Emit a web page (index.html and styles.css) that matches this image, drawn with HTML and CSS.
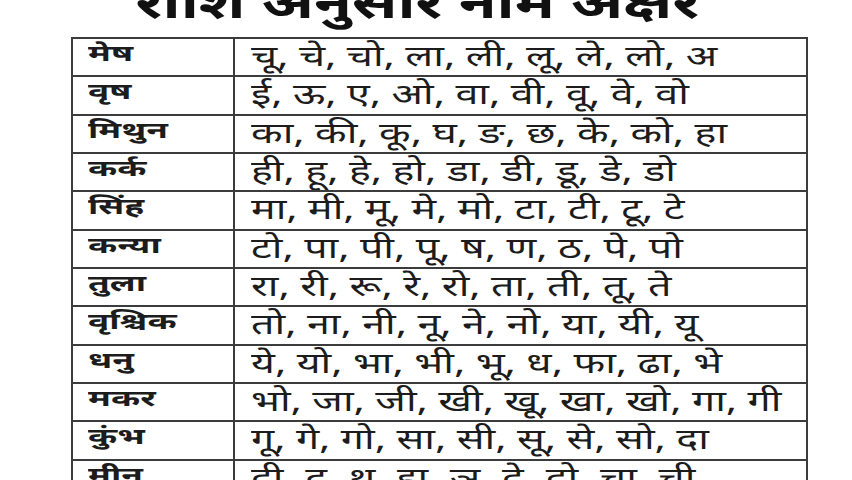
FILE: index.html
```html
<!DOCTYPE html>
<html lang="hi">
<head>
<meta charset="utf-8">
<link rel="stylesheet" href="styles.css">
</head>
<body>
<div class="page">
  <h1 class="title"><span class="wide">राशि अनुसार नाम अक्षर</span></h1>
  <div class="table">
    <div class="cell rashi"><span class="wide">मेष</span></div><div class="cell letters"><span class="wide">चू, चे, चो, ला, ली, लू, ले, लो, अ</span></div>
    <div class="cell rashi"><span class="wide">वृष</span></div><div class="cell letters"><span class="wide">ई, ऊ, ए, ओ, वा, वी, वू, वे, वो</span></div>
    <div class="cell rashi"><span class="wide">मिथुन</span></div><div class="cell letters"><span class="wide">का, की, कू, घ, ङ, छ, के, को, हा</span></div>
    <div class="cell rashi"><span class="wide">कर्क</span></div><div class="cell letters"><span class="wide">ही, हू, हे, हो, डा, डी, डू, डे, डो</span></div>
    <div class="cell rashi"><span class="wide">सिंह</span></div><div class="cell letters"><span class="wide">मा, मी, मू, मे, मो, टा, टी, टू, टे</span></div>
    <div class="cell rashi"><span class="wide">कन्या</span></div><div class="cell letters"><span class="wide">टो, पा, पी, पू, ष, ण, ठ, पे, पो</span></div>
    <div class="cell rashi"><span class="wide">तुला</span></div><div class="cell letters"><span class="wide">रा, री, रू, रे, रो, ता, ती, तू, ते</span></div>
    <div class="cell rashi"><span class="wide">वृश्चिक</span></div><div class="cell letters"><span class="wide">तो, ना, नी, नू, ने, नो, या, यी, यू</span></div>
    <div class="cell rashi"><span class="wide">धनु</span></div><div class="cell letters"><span class="wide">ये, यो, भा, भी, भू, ध, फा, ढा, भे</span></div>
    <div class="cell rashi"><span class="wide">मकर</span></div><div class="cell letters"><span class="wide">भो, जा, जी, खी, खू, खा, खो, गा, गी</span></div>
    <div class="cell rashi"><span class="wide">कुंभ</span></div><div class="cell letters"><span class="wide">गू, गे, गो, सा, सी, सू, से, सो, दा</span></div>
    <div class="cell rashi"><span class="wide">मीन</span></div><div class="cell letters"><span class="wide">दी, दू, थ, झ, ञ, दे, दो, चा, ची</span></div>
  </div>
</div>
</body>
</html>
```
FILE: styles.css
```css
html, body {
  margin: 0;
  padding: 0;
  background: #ffffff;
}
body {
  width: 852px;
  height: 480px;
  overflow: hidden;
  font-family: "Noto Sans Devanagari", "Lohit Devanagari", "Mukta", "Noto Sans", sans-serif;
  color: #1c1c1c;
}
.page {
  padding-left: 71px;
}
.wide {
  display: inline-block;
  transform-origin: left center;
}
.title {
  box-sizing: border-box;
  margin: -22px 0 0 0;
  padding-right: 44px;
  width: 737px;
  height: 59px;
  line-height: 59px;
  font-size: 44px;
  font-weight: bold;
  text-align: center;
  color: #111;
}
.title .wide {
  transform-origin: center center;
  transform: scaleX(1.4);
}
.table {
  display: grid;
  grid-template-columns: 162px 573px;
  grid-auto-rows: 38.33px;
  width: 737px;
  border-top: 2px solid #3c3c3c;
  border-left: 2px solid #3c3c3c;
  box-sizing: border-box;
}
.cell {
  border-right: 2px solid #3c3c3c;
  border-bottom: 2px solid #3c3c3c;
  box-sizing: border-box;
  white-space: nowrap;
  overflow: hidden;
}
.rashi {
  padding-left: 15px;
  font-size: 22px;
  font-weight: bold;
  line-height: 33px;
}
.rashi .wide {
  transform: scaleX(1.6);
}
.letters {
  padding-left: 16px;
  font-size: 29px;
  line-height: 40px;
}
.letters .wide {
  transform: scaleX(1.42);
}
```
